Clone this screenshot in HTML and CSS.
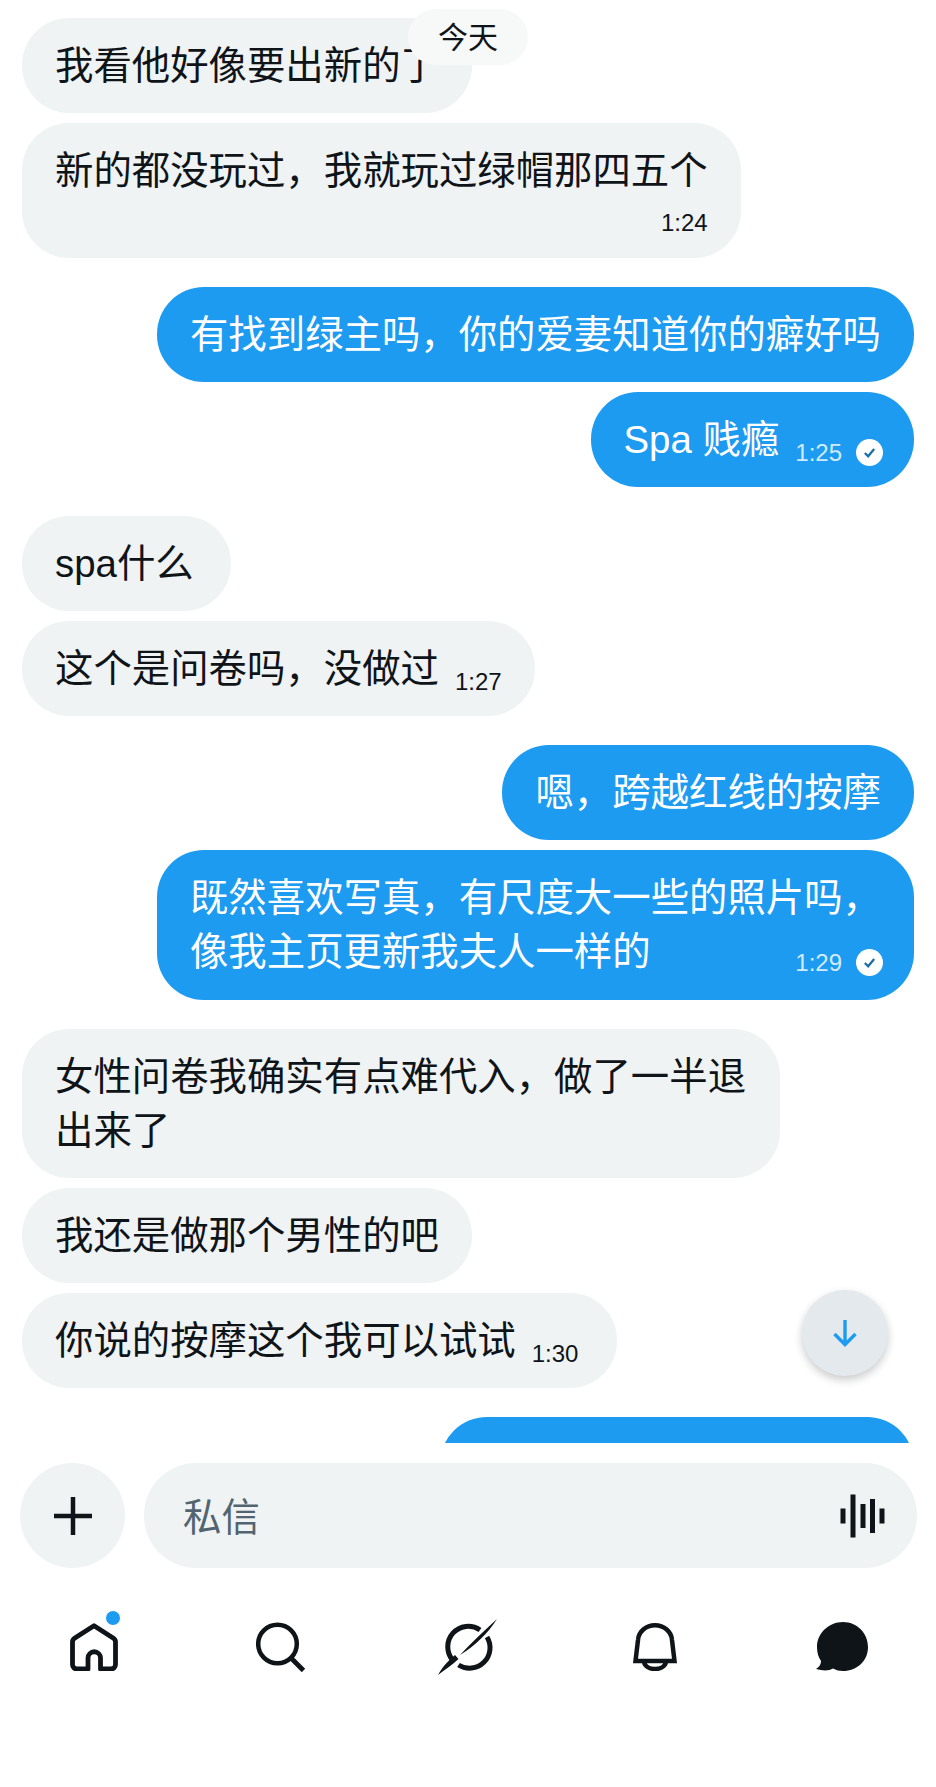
FILE: index.html
```html
<!DOCTYPE html>
<html lang="zh">
<head>
    <meta charset="utf-8">
    <title>私信</title>
    <meta name="viewport" content="width=device-width, initial-scale=1.0">
    <link rel="stylesheet" href="styles.css">
</head>
<body>
    <div class="app">
        <!-- Conversation -->
        <div class="chat">
            <div class="date-chip">今天</div>
            <div class="chat-scroll">
                <div class="group">
                    <div class="msg">我看他好像要出新的了</div>
                    <div class="msg">新的都没玩过，我就玩过绿帽那四五个<div class="meta meta-row"><span class="time">1:24</span></div></div>
                </div>
                <div class="group mine">
                    <div class="msg">有找到绿主吗，你的爱妻知道你的癖好吗</div>
                    <div class="msg">Spa 贱瘾<span class="meta"><span class="time">1:25</span><svg class="check" viewBox="0 0 26 26"><circle cx="13" cy="13" r="13" fill="#fff"/><path d="M8.500 13.500l3.200 3.200 5.800-7" fill="none" stroke="#1a6fa8" stroke-width="2.200"/></svg></span></div>
                </div>
                <div class="group">
                    <div class="msg msg-short">spa什么</div>
                    <div class="msg">这个是问卷吗，没做过<span class="meta"><span class="time">1:27</span></span></div>
                </div>
                <div class="group mine">
                    <div class="msg">嗯，跨越红线的按摩</div>
                    <div class="msg msg-tall">既然喜欢写真，有尺度大一些的照片吗，
                        <div class="last-line">像我主页更新我夫人一样的<span class="meta"><span class="time">1:29</span><svg class="check" viewBox="0 0 26 26"><circle cx="13" cy="13" r="13" fill="#fff"/><path d="M8.500 13.500l3.200 3.200 5.800-7" fill="none" stroke="#1a6fa8" stroke-width="2.200"/></svg></span></div>
                    </div>
                </div>
                <div class="group">
                    <div class="msg">女性问卷我确实有点难代入，做了一半退出来了</div>
                    <div class="msg">我还是做那个男性的吧</div>
                    <div class="msg msg-wide">你说的按摩这个我可以试试<span class="meta"><span class="time">1:30</span></span></div>
                </div>
                <div class="group mine">
                    <div class="msg msg-cut"></div>
                </div>
            </div>
            <button class="scroll-down">
                <svg viewBox="0 0 26 28" width="26" height="28"><path d="M13 1v24M2.500 15L13 25.500 23.500 15" fill="none" stroke="#1d9bf0" stroke-width="3.400"/></svg>
            </button>
        </div>

        <!-- Input -->
        <div class="composer">
            <button class="add-btn">
                <svg viewBox="0 0 40 40" width="40" height="40"><path d="M20 1v38M1 20h38" stroke="#0f1419" stroke-width="4.500"/></svg>
            </button>
            <div class="input-box">
                <span class="placeholder">私信</span>
                <svg class="wave" viewBox="0 0 46 44" width="46" height="44"><path d="M3 14.500v15M13 .5v43M23 10v24M32.500 5v34M42 14.500v15" stroke="#0f1419" stroke-width="5"/></svg>
            </div>
        </div>

        <!-- Bottom nav -->
        <div class="nav">
            <div class="nav-item">
                <span class="home-icon">
                    <svg viewBox="0 0 48 48" width="48" height="48"><path d="M18 46H7a4.500 4.500 0 0 1-4.500-4.500V19c0-1.600.8-3 2-3.800L24 2.800l19.500 12.400c1.200.8 2 2.200 2 3.800v22.500A4.500 4.500 0 0 1 41 46H30.500V35a6.250 6.250 0 0 0-12.500 0z" fill="none" stroke="#0f1419" stroke-width="4.800" stroke-linejoin="round"/></svg>
                    <span class="nav-dot"></span>
                </span>
            </div>
            <div class="nav-item">
                <svg viewBox="0 0 50 50" width="50" height="50"><circle cx="21.500" cy="22" r="19.300" fill="none" stroke="#0f1419" stroke-width="4.500"/><path d="M35 36l12.500 12.500" stroke="#0f1419" stroke-width="4.800"/></svg>
            </div>
            <div class="nav-item">
                <svg viewBox="0 0 60 56" width="60" height="56"><path d="M42 11A20.500 20.500 0 0 0 15 41.500M20.500 46A20.500 20.500 0 0 0 49 18" fill="none" stroke="#0f1419" stroke-width="5"/><path d="M59 0C50 14 38 26 22 36 33 24 46 12 59 0zM0 56C5 47 11 41 17 36l3.500 4C14 46 8 50 0 56z" fill="#0f1419"/></svg>
            </div>
            <div class="nav-item">
                <svg viewBox="0 0 44 48" width="44" height="48"><path d="M2.500 38L5 17C5.500 8.500 13 2.300 22 2.300S38.500 8.500 39 17l2.500 21zM11 39c1 4.500 5.500 7 11 7s10-2.500 11-7" fill="none" stroke="#0f1419" stroke-width="4.500"/></svg>
            </div>
            <div class="nav-item">
                <svg viewBox="0 0 52 50" width="52" height="50"><path d="M27 0c14 0 25 11 25 25S41 49 27 49c-3.800 0-7-.8-10-2.500-4 2.500-10 2.500-17 .5 3.500-2 5-5 5-8-2.800-4-4-9-4-14C1 11 13 0 27 0z" fill="#0f1419"/></svg>
            </div>
        </div>
    </div>
</body>
</html>
```

FILE: styles.css
```css
body {
    margin: 0;
    padding: 0;
    background-color: #fff;
    color: #0f1419;
    font-family: 'Liberation Sans', 'Noto Sans CJK SC', sans-serif;
}

.app {
    height: 1787px;
    display: flex;
    flex-direction: column;
    overflow: hidden;
}

/* Conversation */
.chat {
    position: relative;
    height: 1443px;
    flex-shrink: 0;
}

.chat-scroll {
    height: 100%;
    box-sizing: border-box;
    padding: 18px 22px 0 22px;
    display: flex;
    flex-direction: column;
    gap: 29px;
    overflow: hidden;
}

.group {
    display: flex;
    flex-direction: column;
    align-items: flex-start;
    gap: 10px;
    flex-shrink: 0;
}

.group.mine {
    align-items: flex-end;
}

.msg {
    box-sizing: border-box;
    max-width: 758px;
    padding: 20.500px 33px;
    background: #eff3f4;
    border-radius: 47px;
    font-size: 38.400px;
    line-height: 54px;
}

.mine .msg {
    background: #1d9bf0;
    color: #fff;
}

.msg-short {
    padding-right: 37px;
}

.msg-wide {
    padding-right: 39px;
}

.msg-tall {
    padding-bottom: 21.500px;
}

.msg-cut {
    width: 474px;
    height: 95px;
}

.meta {
    display: inline-flex;
    align-items: center;
    gap: 14px;
    margin-left: 16px;
    font-size: 24px;
    line-height: 28px;
    vertical-align: -8px;
}

.mine .meta {
    color: #d2ebfc;
    margin-right: -2px;
}

.meta-row {
    display: flex;
    justify-content: flex-end;
    margin-top: 11px;
    margin-bottom: 1px;
    vertical-align: baseline;
}

.last-line {
    display: flex;
    justify-content: space-between;
    align-items: flex-end;
}

.last-line .meta {
    margin-bottom: 2px;
}

.check {
    width: 27px;
    height: 27px;
}

/* Today chip */
.date-chip {
    position: absolute;
    top: 9px;
    left: 408px;
    z-index: 2;
    width: 120px;
    height: 56px;
    background: #f7f9f9;
    border-radius: 28px;
    font-size: 30px;
    line-height: 58px;
    text-align: center;
}

.scroll-down {
    position: absolute;
    top: 1290px;
    left: 802px;
    width: 86px;
    height: 86px;
    padding: 0;
    display: flex;
    align-items: center;
    justify-content: center;
    border: none;
    border-radius: 50%;
    background: #e4e9ed;
    box-shadow: 0 4px 8px rgba(15, 20, 25, 0.22);
}

/* Input */
.composer {
    display: flex;
    gap: 19px;
    margin-top: 20px;
    padding: 0 19px 0 20px;
}

.add-btn {
    width: 105px;
    height: 105px;
    padding: 0;
    display: flex;
    align-items: center;
    justify-content: center;
    border: none;
    border-radius: 50%;
    background: #eff3f4;
}

.input-box {
    flex: 1;
    display: flex;
    align-items: center;
    justify-content: space-between;
    padding: 0 31px 0 39px;
    background: #eff3f4;
    border-radius: 52px;
}

.placeholder {
    color: #536471;
    font-size: 38.400px;
    margin-bottom: 4px;
}

/* Bottom nav */
.nav {
    display: flex;
    margin-top: 49px;
}

.nav-item {
    flex: 1;
    height: 60px;
    display: flex;
    align-items: center;
    justify-content: center;
}

.home-icon {
    position: relative;
    display: flex;
}

.nav-dot {
    position: absolute;
    top: -12px;
    right: -2px;
    width: 14px;
    height: 14px;
    background: #1d9bf0;
    border-radius: 50%;
}
```
